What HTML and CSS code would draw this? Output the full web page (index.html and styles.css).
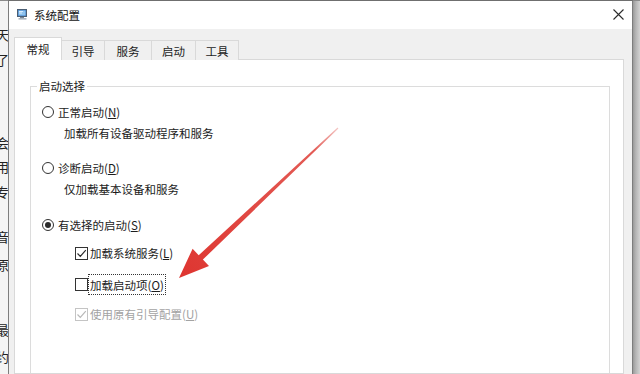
FILE: index.html
```html
<!DOCTYPE html>
<html lang="zh-CN">
<head>
<meta charset="utf-8">
<title>系统配置</title>
<link rel="stylesheet" href="styles.css">
</head>
<body>
<div class="behind">
  <span class="bc c1">天</span>
  <span class="bc c2">了</span>
  <span class="bc c3">会</span>
  <span class="bc c4">用</span>
  <span class="bc c5">专</span>
  <span class="bc c6">音</span>
  <span class="bc c7">原</span>
  <span class="bc c8">最</span>
  <span class="bc c9">约</span>
</div>
<div class="window">
  <div class="titlebar">
    <svg class="appicon" width="11" height="11" viewBox="0 0 11 11">
      <rect x="0.5" y="0.5" width="9" height="7" fill="#3d7fc4" stroke="#4a5d73"/>
      <rect x="1.5" y="1.5" width="7" height="5" fill="#8fc3ef"/>
      <path d="M2 2.5 L6 2.5 M2 4 L5 4" stroke="#eaf5ff" stroke-width="0.8"/>
      <rect x="3" y="8" width="4" height="1.2" fill="#7a8796"/>
      <rect x="1.5" y="9.2" width="8" height="1.3" fill="#9aa5b1"/>
    </svg>
    <span class="title">系统配置</span>
    <svg class="close" width="11" height="11" viewBox="0 0 11 11">
      <path d="M0.5 0.5 L10.5 10.5 M10.5 0.5 L0.5 10.5" stroke="#2b2b2b" stroke-width="1.1"/>
    </svg>
  </div>
  <div class="body">
    <div class="tabs">
      <div class="tab active w48">常规</div>
      <div class="tab w43">引导</div>
      <div class="tab w47">服务</div>
      <div class="tab w44">启动</div>
      <div class="tab w43">工具</div>
    </div>
    <div class="panel">
      <div class="group">
        <span class="legend">启动选择</span>
        <div class="row r1"><span class="radio"></span><span class="lbl">正常启动(<u>N</u>)</span></div>
        <div class="desc d1">加载所有设备驱动程序和服务</div>
        <div class="row r2"><span class="radio"></span><span class="lbl">诊断启动(<u>D</u>)</span></div>
        <div class="desc d2">仅加载基本设备和服务</div>
        <div class="row r3"><span class="radio on"></span><span class="lbl">有选择的启动(<u>S</u>)</span></div>
        <div class="row sub s1"><span class="cb checked"><svg width="11" height="11" viewBox="0 0 11 11"><path d="M1.5 5.5 L4.3 8.3 L9.8 2.2" fill="none" stroke="#2b2b2b" stroke-width="1.2"/></svg></span><span class="lbl">加载系统服务(<u>L</u>)</span></div>
        <div class="row sub s2"><span class="cb"></span><span class="lbl focus">加载启动项(<u>O</u>)</span></div>
        <div class="row sub s3 disabled"><span class="cb dis"><svg width="11" height="11" viewBox="0 0 11 11"><path d="M1.5 5.5 L4.3 8.3 L9.8 2.2" fill="none" stroke="#b8b8b8" stroke-width="1.2"/></svg></span><span class="lbl">使用原有引导配置(<u>U</u>)</span></div>
      </div>
    </div>
  </div>
</div>
<div class="rightedge"></div>
<svg class="arrow" width="640" height="374" viewBox="0 0 640 374">
  <defs>
    <linearGradient id="ag" x1="338" y1="128" x2="179" y2="278" gradientUnits="userSpaceOnUse">
      <stop offset="0" stop-color="#f4c6c4"/>
      <stop offset="0.15" stop-color="#e35b55"/>
      <stop offset="1" stop-color="#de3530"/>
    </linearGradient>
  </defs>
  <polygon fill="url(#ag)" points="179,278 209,266.1 202.9,259.6 338.4,128.4 337.6,127.6 198.7,255.2 192.6,248.7"/>
</svg>
</body>
</html>
```
FILE: styles.css
```css
* { box-sizing: border-box; }
html, body { margin: 0; padding: 0; }
body {
  width: 640px;
  height: 374px;
  overflow: hidden;
  display: flex;
  position: relative;
  background: #f0f0f0;
  font-family: "Noto Sans CJK SC", "Noto Sans", sans-serif;
  font-size: 11.5px;
  color: #1c1c1c;
}
.behind {
  flex: 0 0 8px;
  background: #f4f4f4;
  border-top: 1px solid #8a8a8a;
  overflow: hidden;
  display: flex;
  flex-direction: column;
  font-size: 13px;
  line-height: 14px;
  color: #222;
}
.bc { display: block; margin-left: -4px; width: 14px; }
.c1 { margin-top: 27px; }
.c2 { margin-top: 11px; }
.c3 { margin-top: 69px; }
.c4 { margin-top: 10px; }
.c5 { margin-top: 11px; }
.c6 { margin-top: 31px; }
.c7 { margin-top: 14px; }
.c8 { margin-top: 51px; }
.c9 { margin-top: 13px; }

.window {
  flex: 0 0 625px;
  border-top: 1px solid #6f6f6f;
  border-left: 1px solid #7d7d7d;
  border-right: 1px solid #7d7d7d;
  background: #f0f0f0;
  display: flex;
  flex-direction: column;
}
.titlebar {
  height: 28px;
  background: #ffffff;
  display: flex;
  align-items: center;
  padding: 0 8px 0 8px;
  flex: 0 0 28px;
}
.appicon { display: block; margin-top: -1px; }
.title { margin-left: 6px; font-size: 11.5px; color: #111; margin-top: -1px; }
.close { margin-left: auto; margin-top: -1px; }

.body {
  flex: 1;
  display: flex;
  flex-direction: column;
  padding: 9px 8px 0 5px;
}
.tabs {
  display: flex;
  align-items: flex-end;
  height: 22px;
  position: relative;
  z-index: 1;
  margin-bottom: -1px;
}
.tab {
  height: 20px;
  border: 1px solid #d9d9d9;
  border-left: none;
  border-bottom: none;
  background: #f0f0f0;
  display: flex;
  align-items: center;
  justify-content: center;
  font-size: 11.5px;
  line-height: 14px;
  color: #1c1c1c;
}
.tab.active {
  height: 23px;
  background: #ffffff;
  border-left: 1px solid #d9d9d9;
  border-right: 1px solid #d9d9d9;
  padding-top: 0;
}
.w48 { width: 48px; }
.w43 { width: 43px; }
.w47 { width: 47px; }
.w44 { width: 44px; }

.panel {
  flex: 1;
  background: #ffffff;
  border: 1px solid #d9d9d9;
  padding: 26px 13px 0 15px;
  display: flex;
  flex-direction: column;
}
.group {
  flex: 1;
  border: 1px solid #dcdcdc;
  border-bottom: none;
  padding-left: 11px;
  display: flex;
  flex-direction: column;
  align-items: flex-start;
}
.legend {
  display: block;
  margin-top: -9px;
  margin-left: -5px;
  padding: 0 2px;
  background: #ffffff;
  line-height: 16px;
  height: 16px;
  color: #1c1c1c;
}
.row {
  height: 20px;
  display: flex;
  align-items: center;
}
.lbl { line-height: 14px; }
u { text-decoration: underline; text-underline-offset: 1px; }
.radio {
  width: 12px;
  height: 12px;
  border: 1px solid #333;
  border-radius: 50%;
  margin-right: 4px;
  display: flex;
  align-items: center;
  justify-content: center;
}
.radio.on::after {
  content: "";
  width: 6px;
  height: 6px;
  border-radius: 50%;
  background: #2b2b2b;
}
.desc { height: 20px; line-height: 20px; margin-left: 22px; }
.r1 { margin-top: 8px; }
.d1 { margin-top: 1px; }
.r2 { margin-top: 15px; }
.d2 { margin-top: 1px; }
.r3 { margin-top: 16px; }
.s1 { margin-top: 8px; }
.s2 { margin-top: 11px; }
.s3 { margin-top: 10px; }
.sub { margin-left: 33px; }
.cb {
  width: 13px;
  height: 13px;
  border: 1px solid #333;
  margin-right: 2px;
  display: flex;
  align-items: center;
  justify-content: center;
  background: #fff;
}
.cb svg { display: block; }
.cb.dis { border-color: #c4c4c4; }
.focus {
  outline: 1px dotted #333;
  padding: 3px 1px 2px 1px;
  margin-left: -1px;
}
.disabled .lbl { color: #a3a3a3; }

.rightedge {
  flex: 0 0 7px;
  background: linear-gradient(90deg, #9a9a9a 0, #b5b5b5 40%, #d2d2d2 100%);
  border-top: 1px solid #8a8a8a;
}
.arrow {
  position: absolute;
  left: 0;
  top: 0;
  pointer-events: none;
}
```
